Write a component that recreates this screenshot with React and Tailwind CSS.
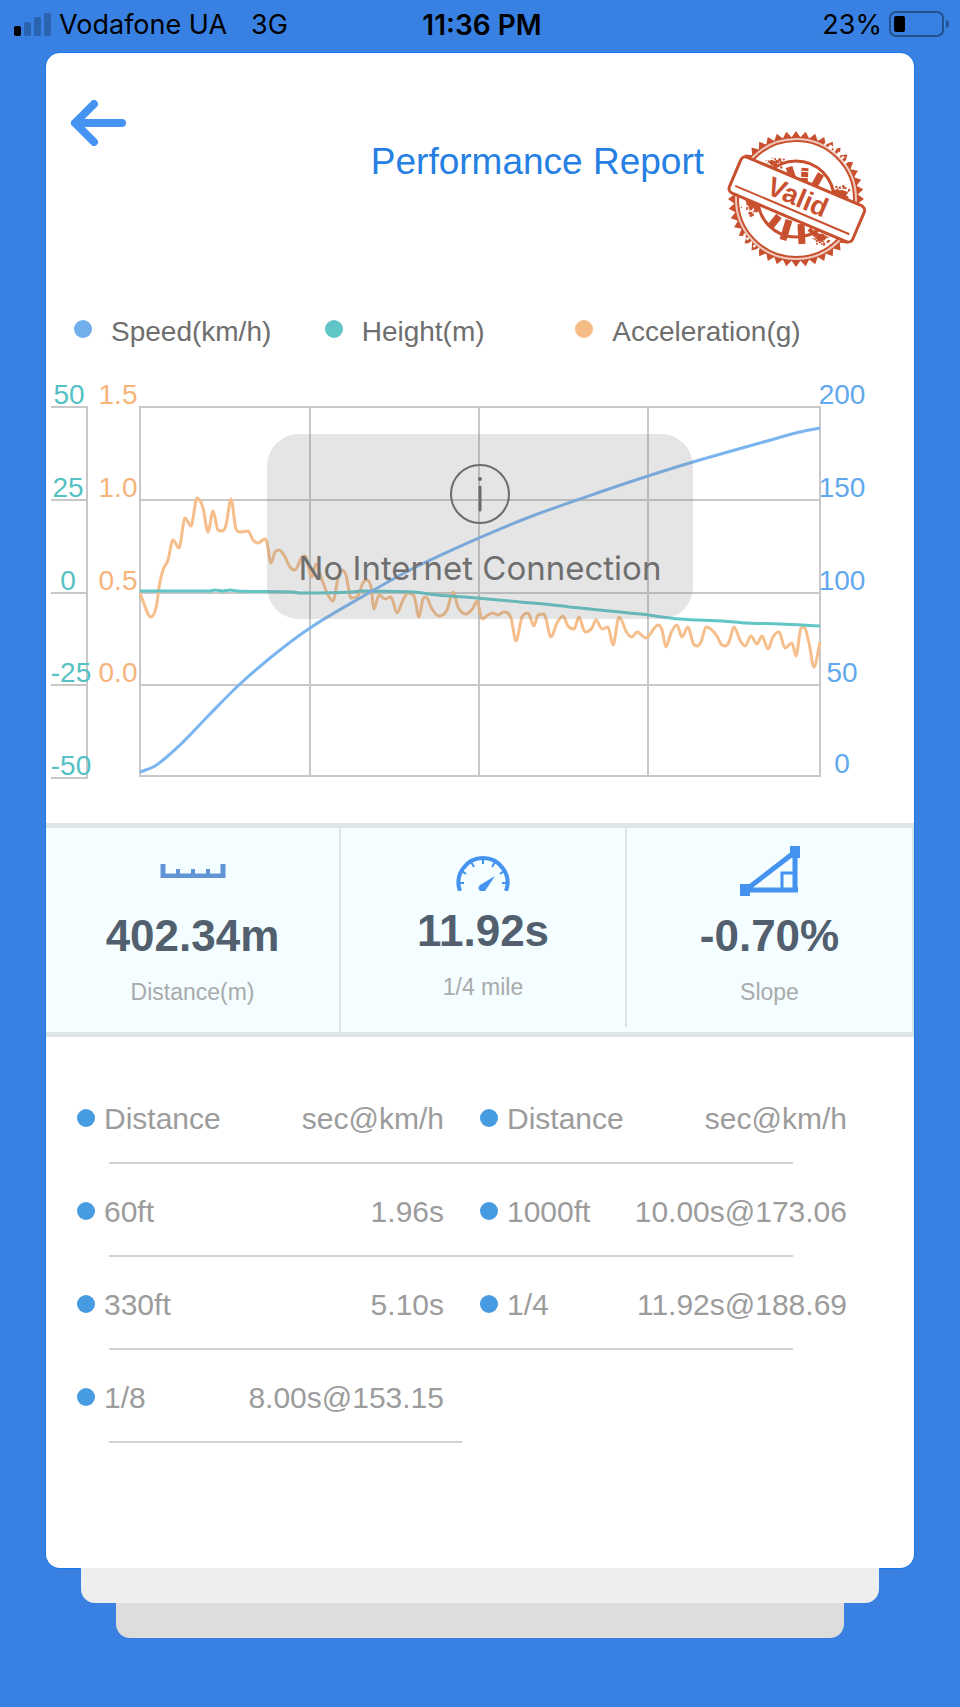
import React from 'react';

const legend = [
  { label: 'Speed(km/h)', dot: 'bg-[#70aeec]' },
  { label: 'Height(m)', dot: 'bg-[#61c4c6]' },
  { label: 'Acceleration(g)', dot: 'bg-[#f6bc85]' },
];

const speed = [
  [140, 772], [155, 766], [180, 745], [210, 714], [240, 684], [275, 654], [310, 628], [360, 598],
  [410, 570], [479, 538], [527, 518], [600, 492], [648, 476], [693, 462], [767, 441], [800, 432],
  [820, 428],
];

const height = [
  [140, 591], [210, 591], [215, 590], [223, 591], [230, 590], [237, 591], [293, 592], [300, 593],
  [352, 592], [362, 591], [413, 592], [437, 595], [477, 598], [520, 602], [553, 605], [580, 608],
  [620, 612], [640, 614], [680, 619], [723, 621], [747, 623], [780, 624], [820, 626],
];

const acceleration = [
  [140, 593], [151, 617], [157, 603], [159, 587], [163, 570], [168, 560], [173, 540], [179, 548],
  [185, 518], [191, 526], [197, 498], [203, 508], [208, 532], [213, 511], [218, 530], [222, 531],
  [226, 525], [231, 499], [236, 529], [240, 532], [248, 531], [253, 540], [258, 543], [265, 539],
  [267, 543], [271, 563], [275, 552], [279, 550], [284, 555], [290, 567], [295, 570], [302, 557],
  [305, 556], [312, 577], [316, 564], [322, 580], [328, 595], [333, 601], [338, 578], [341, 570],
  [346, 575], [351, 598], [357, 597], [363, 583], [367, 580], [371, 587], [374, 609], [379, 595],
  [385, 599], [391, 597], [397, 613], [403, 600], [408, 593], [414, 596], [419, 617], [423, 599],
  [426, 597], [432, 609], [439, 616], [447, 610], [453, 592], [458, 607], [466, 614], [473, 608],
  [477, 601], [482, 619], [488, 615], [493, 613], [498, 615], [504, 612], [511, 618], [516, 641],
  [522, 617], [528, 613], [534, 626], [538, 615], [544, 614], [551, 637], [557, 623], [563, 616],
  [568, 626], [574, 629], [579, 617], [585, 632], [592, 628], [596, 620], [602, 629], [608, 627],
  [613, 645], [619, 617], [627, 633], [632, 637], [637, 632], [646, 638], [658, 625], [662, 630],
  [666, 647], [671, 633], [677, 625], [682, 637], [688, 627], [693, 643], [697, 646], [701, 642],
  [706, 627], [717, 636], [721, 644], [725, 646], [729, 642], [734, 627], [740, 640], [745, 646],
  [751, 636], [757, 644], [762, 636], [768, 649], [773, 637], [779, 632], [785, 648], [792, 643],
  [796, 656], [801, 628], [804, 627], [809, 643], [814, 667], [820, 642],
];

// Smooth line through the points, flat at each local peak and dip
const toPath = (pts) => {
  const slope = (a, b) => (b[1] - a[1]) / (b[0] - a[0]);
  const tangents = pts.map((p, i) => {
    if (i === 0) return slope(p, pts[1]);
    if (i === pts.length - 1) return slope(pts[i - 1], p);
    const before = slope(pts[i - 1], p);
    const after = slope(p, pts[i + 1]);
    if (before * after <= 0) return 0;
    const limit = 3 * Math.min(Math.abs(before), Math.abs(after));
    return Math.sign(before) * Math.min(Math.abs(before + after) / 2, limit);
  });
  return pts.slice(1).reduce((d, p, i) => {
    const prev = pts[i];
    const dx = (p[0] - prev[0]) / 3;
    return `${d} C${prev[0] + dx} ${prev[1] + tangents[i] * dx} ${p[0] - dx} ${p[1] - tangents[i + 1] * dx} ${p[0]} ${p[1]}`;
  }, `M${pts[0][0]} ${pts[0][1]}`);
};

const rowLines = [407, 500, 593, 685];
const heightTicks = [
  { y: 407, x: 69, label: '50' },
  { y: 500, x: 68, label: '25' },
  { y: 593, x: 68, label: '0' },
  { y: 685, x: 71, label: '-25' },
  { y: 778, x: 71, label: '-50' },
];
const accelLabels = ['1.5', '1.0', '0.5', '0.0'];
const speedLabels = ['200', '150', '100', '50', '0'];

const Chart = () => (
  <svg viewBox="46 364 868 426" className="block w-full" fill="none" role="img" aria-label="Speed, height and acceleration">
    <g stroke="#c8c8c8" strokeWidth="2">
      <path d="M140 407H820V776H140ZM310 407V776M479 407V776M648 407V776M140 500H820M140 593H820M140 685H820" />
      <path d="M87 407V778" />
      {heightTicks.map((t) => (
        <path key={t.y} d={`M51 ${t.y}H88`} />
      ))}
    </g>
    <g strokeWidth="3" strokeLinejoin="round">
      <path d={toPath(acceleration)} stroke="#f6be8a" />
      <path d={toPath(height)} stroke="#62c6c7" />
      <path d={toPath(speed)} stroke="#7ab5f0" />
    </g>
    <g className="text-[28px]" textAnchor="middle">
      <g fill="#55c1c4">
        {heightTicks.map((t) => (
          <text key={t.label} x={t.x} y={t.y - 3}>{t.label}</text>
        ))}
      </g>
      <g fill="#f6b47a">
        {accelLabels.map((label, i) => (
          <text key={label} x="118" y={rowLines[i] - 3}>{label}</text>
        ))}
      </g>
      <g fill="#62a8ee">
        {speedLabels.map((label, i) => (
          <text key={label} x="842" y={i < 4 ? rowLines[i] - 3 : 773}>{label}</text>
        ))}
      </g>
    </g>
  </svg>
);

const Toast = () => (
  <div role="status" className="absolute left-1/2 top-[70px] flex w-[426px] -translate-x-1/2 flex-col items-center rounded-[32px] bg-[#7d7d7d]/20 pb-[33px] pt-[30px]">
    <svg width="60" height="60" viewBox="0 0 60 60" fill="none" stroke="#6b6b6b">
      <circle cx="30" cy="30" r="29" strokeWidth="2" />
      <path d="M30 23V46" strokeWidth="3" strokeLinecap="round" />
      <circle cx="30" cy="15" r="2" fill="#6b6b6b" stroke="none" />
    </svg>
    <p className="mt-[26px] whitespace-nowrap font-['Inter',sans-serif] text-[33px] leading-9 text-[#6f6f6f]">No Internet Connection</p>
  </div>
);

const teeth = Array.from({ length: 88 }, (_, i) => {
  const a = (i * Math.PI) / 44;
  const r = i % 2 ? 62 : 68;
  return `${(69 + r * Math.sin(a)).toFixed(1)},${(69 - r * Math.cos(a)).toFixed(1)}`;
}).join(' ');

// worn ink patches around the band of the stamp
const patches = [
  { x: 36, y: 27, w: 22, h: 12 },
  { x: 104, y: 54, w: 20, h: 15 },
  { x: 13, y: 69, w: 28, h: 17 },
  { x: 84, y: 101, w: 20, h: 15 },
];
const noise = (n) => {
  const v = Math.sin(n * 127.1) * 43758.5;
  return v - Math.floor(v);
};
const specks = patches.flatMap((p, k) =>
  Array.from({ length: 46 }, (_, i) => {
    const n = k * 200 + i * 4;
    const spread = (noise(n) + noise(n + 1)) / 2;
    const drop = (noise(n + 2) + noise(n + 3)) / 2;
    return { x: p.x + p.w * spread, y: p.y + p.h * drop, r: 0.5 + noise(n + 5) };
  })
);

const Stamp = () => (
  <svg width="142" height="138" viewBox="0 0 142 138" className="mt-[30px]" fill="none" stroke="#c9502f" role="img" aria-label="Valid">
    <polygon points={teeth} fill="#c9502f" stroke="none" />
    <circle cx="69" cy="69" r="61" fill="#fff" strokeWidth="2" />
    <circle cx="69" cy="69" r="60" stroke="#eec8bb" strokeWidth="2" />
    <circle cx="69" cy="69" r="58" strokeWidth="2" />
    <path d="M98 13l8 6 8 7 6 7" stroke="#fff" strokeWidth="4" strokeDasharray="2 3 4 2" />
    <path d="M17 104l7 9 8 7" stroke="#fff" strokeWidth="3" strokeDasharray="2 3" />
    <circle cx="69" cy="69" r="38" strokeWidth="3" />
    <g strokeWidth="7">
      <path d="M62 37l5 15M94 44l-8 14M52 86l-9 11M62 90l-6 20M74 94l1 20" />
      <path d="M78 38l-1 19" strokeDasharray="3 1 5 1" />
      <path d="M82 99l7 7" strokeWidth="4" />
    </g>
    <g fill="#c9502f" stroke="none">
      {specks.map((s, i) => (
        <circle key={i} cx={s.x} cy={s.y} r={s.r} />
      ))}
      <path d="M105 58l5 3 6-1 5 3-2 2 3 3-5 0-6-2-5-3z" />
      <path d="M18 70l10 1 10 5-5 2-3 4-4-4-5-2z" />
      <path d="M84 101l10 3 7 3-6 2 3 4-6-2-3-5z" />
    </g>
    <path d="M44 79l5 4 6 1M34 77l6 8" stroke="#fff" strokeWidth="2" strokeDasharray="2 2" />
    <g transform="rotate(23 70 69)">
      <rect x="3" y="50" width="134" height="39" rx="5" fill="#fff" strokeWidth="3" />
      <path d="M8 81H132" strokeWidth="2" />
      <text x="70" y="76" textAnchor="middle" fill="#c9502f" stroke="none" className="text-[27px] font-bold">Valid</text>
    </g>
  </svg>
);

const RulerIcon = () => (
  <svg width="66" height="14" viewBox="0 0 66 14" className="self-center" fill="none" stroke="#6295d5">
    <path d="M3 0V12H63V0" strokeWidth="5" />
    <path d="M18 5V11M33 5V11M48 5V11" strokeWidth="4" />
  </svg>
);

const GaugeIcon = () => (
  <svg width="54" height="35" viewBox="0 0 54 35" className="self-end" fill="none" stroke="#4593f0">
    <path d="M4 35A24.5 24.5 0 1 1 50 35" strokeWidth="4" />
    <path d="M27 3V8M15 6l3 5M39 6l-3 5M6 15l4 3M48 15l-4 3M2 27H8M52 27H46" strokeWidth="2" />
    <path d="M39 20L24 29A4 4 0 0 0 24 35H29L31 32Z" fill="#4593f0" stroke="none" />
  </svg>
);

const SlopeIcon = () => (
  <svg width="60" height="50" viewBox="0 0 60 50" fill="none" stroke="#4593f0">
    <path d="M7 43L55 6M55 6V44M6 44H58" strokeWidth="5" />
    <path d="M42 43V27H54" strokeWidth="3" />
    <path d="M0 38H10V50H0ZM50 0H60V12H50Z" fill="#4593f0" stroke="none" />
  </svg>
);

const stats = [
  { icon: RulerIcon, value: '402.34m', label: 'Distance(m)', cell: 'pt-[18px] pb-[26px]' },
  { icon: GaugeIcon, value: '11.92s', label: '1/4 mile', cell: 'pt-[13px] pb-[26px]' },
  { icon: SlopeIcon, value: '-0.70%', label: 'Slope', cell: 'pt-[18px] pb-[26px]' },
];

const rows = [
  ['60ft', '1.96s', '1000ft', '10.00s@173.06'],
  ['330ft', '5.10s', '1/4', '11.92s@188.69'],
  ['1/8', '8.00s@153.15'],
];

const Name = ({ children }) => (
  <span className="flex items-center gap-[9px]">
    <span className="mb-0.5 size-[18px] shrink-0 rounded-full bg-[#479be0]" />
    {children}
  </span>
);

const Divider = ({ short }) => (
  <tr aria-hidden="true">
    <td colSpan={short ? 2 : 4} className="p-0">
      <div className={short ? 'ml-8 -mr-[18px] h-[2px] bg-[#d2d2d2]' : 'ml-8 mr-[54px] h-[2px] bg-[#d2d2d2]'} />
    </td>
  </tr>
);

const StatusBar = () => (
  <div className="grid h-[50px] grid-cols-[1fr_auto_1fr] items-center pl-[14px] pr-[10px] font-['Inter',sans-serif] text-[27px] leading-8 text-black">
    <div className="flex items-center">
      <svg width="38" height="24" viewBox="0 0 38 24" className="mb-[3px]" aria-hidden="true">
        <rect x="0" y="14" width="7" height="10" rx="2" />
        <g fill="#2a63b0">
          <rect x="10" y="10" width="7" height="14" rx="2" />
          <rect x="20" y="5" width="7" height="19" rx="2" />
          <rect x="30" y="1" width="7" height="23" rx="2" />
        </g>
      </svg>
      <span className="ml-[7px]">Vodafone UA</span>
      <span className="ml-6">3G</span>
    </div>
    <span className="text-[28px] font-semibold">11:36 PM</span>
    <div className="flex items-center justify-end gap-[7px]">
      <span>23%</span>
      <svg width="61" height="26" viewBox="0 0 61 26" className="mb-[3px]" fill="none" aria-hidden="true">
        <rect x="1" y="1" width="53" height="24" rx="6" stroke="#22518e" strokeWidth="2" />
        <rect x="5" y="5" width="11" height="16" rx="2" fill="#000" />
        <path d="M57 9C61 10 61 16 57 17Z" fill="#22518e" />
      </svg>
    </div>
  </div>
);

const App = () => (
  <div className="min-h-screen bg-[#3880e2] pb-[69px] font-['Liberation_Sans',Arial,sans-serif]">
    <StatusBar />

    <main className="mx-[46px] mt-[3px] rounded-[14px] bg-white pb-[125px] shadow-[0_0_0_1px_#1878e6]">
      <header className="flex items-start pl-6 pr-[45px] pt-[47px]">
        <button type="button" aria-label="Back" className="mr-auto">
          <svg width="56" height="46" viewBox="0 0 56 46" fill="none" stroke="#4593f0" strokeWidth="8" strokeLinecap="round" strokeLinejoin="round">
            <path d="M52 23H5M24 4L5 23L24 42" />
          </svg>
        </button>
        <h1 className="mr-[23px] mt-[42px] text-[37px] leading-10 text-[#2680e3]">Performance Report</h1>
        <Stamp />
      </header>

      <ul className="mt-[48px] grid grid-cols-3 pl-[28px] pr-[88px]">
        {legend.map((item) => (
          <li key={item.label} className="flex items-center gap-[19px] whitespace-nowrap text-[28px] leading-8 text-[#6e6e6e]">
            <span className={`mb-1.5 size-[18px] shrink-0 rounded-full ${item.dot}`} />
            {item.label}
          </li>
        ))}
      </ul>

      <div className="relative mt-4">
        <Chart />
        <Toast />
      </div>

      <section className="mt-[33px] grid grid-cols-[295fr_286fr_287fr] items-start border-y-[5px] border-[#dde6e6] bg-[#f4fdff]">
        {stats.map(({ icon: Icon, value, label, cell }) => (
          <div key={label} className={`flex flex-col items-center border-r-2 border-[#dde6e6] ${cell}`}>
            <div className="flex h-[50px]">
              <Icon />
            </div>
            <p className="mt-4 text-[44px] font-bold leading-[48px] text-[#515f6e]">{value}</p>
            <p className="mt-[18px] text-[23px] leading-7 text-[#a8aaab]">{label}</p>
          </div>
        ))}
      </section>

      <div className="ml-[31px] mr-[67px] mt-[34px]">
        <table className="w-full table-fixed text-[30px] leading-9 text-[#9c9c9c]">
          <colgroup>
            <col className="w-[160px]" />
            <col className="w-[207px]" />
            <col className="w-[170px]" />
            <col />
          </colgroup>
          <thead>
            <tr className="h-[91px]">
              <th className="p-0 pt-[5px] font-normal"><Name>Distance</Name></th>
              <th className="p-0 pt-[5px] text-right font-normal">sec@km/h</th>
              <th className="p-0 pl-9 pt-[5px] font-normal"><Name>Distance</Name></th>
              <th className="p-0 pt-[5px] text-right font-normal">sec@km/h</th>
            </tr>
            <Divider />
          </thead>
          <tbody>
            {rows.map(([name, value, name2, value2]) => (
              <React.Fragment key={name}>
                <tr className="h-[91px]">
                  <td className="p-0 pt-[5px]"><Name>{name}</Name></td>
                  <td className="whitespace-nowrap p-0 pt-[5px] text-right">{value}</td>
                  {name2 && <td className="p-0 pl-9 pt-[5px]"><Name>{name2}</Name></td>}
                  {value2 && <td className="whitespace-nowrap p-0 pt-[5px] text-right">{value2}</td>}
                </tr>
                <Divider short={!name2} />
              </React.Fragment>
            ))}
          </tbody>
        </table>
      </div>
    </main>

    {/* edges of the cards stacked underneath */}
    <div className="mx-[81px] h-[35px] rounded-b-[14px] bg-[#eee]" />
    <div className="mx-[116px] h-[35px] rounded-b-[14px] bg-[#ddd]" />
  </div>
);

export default App;
